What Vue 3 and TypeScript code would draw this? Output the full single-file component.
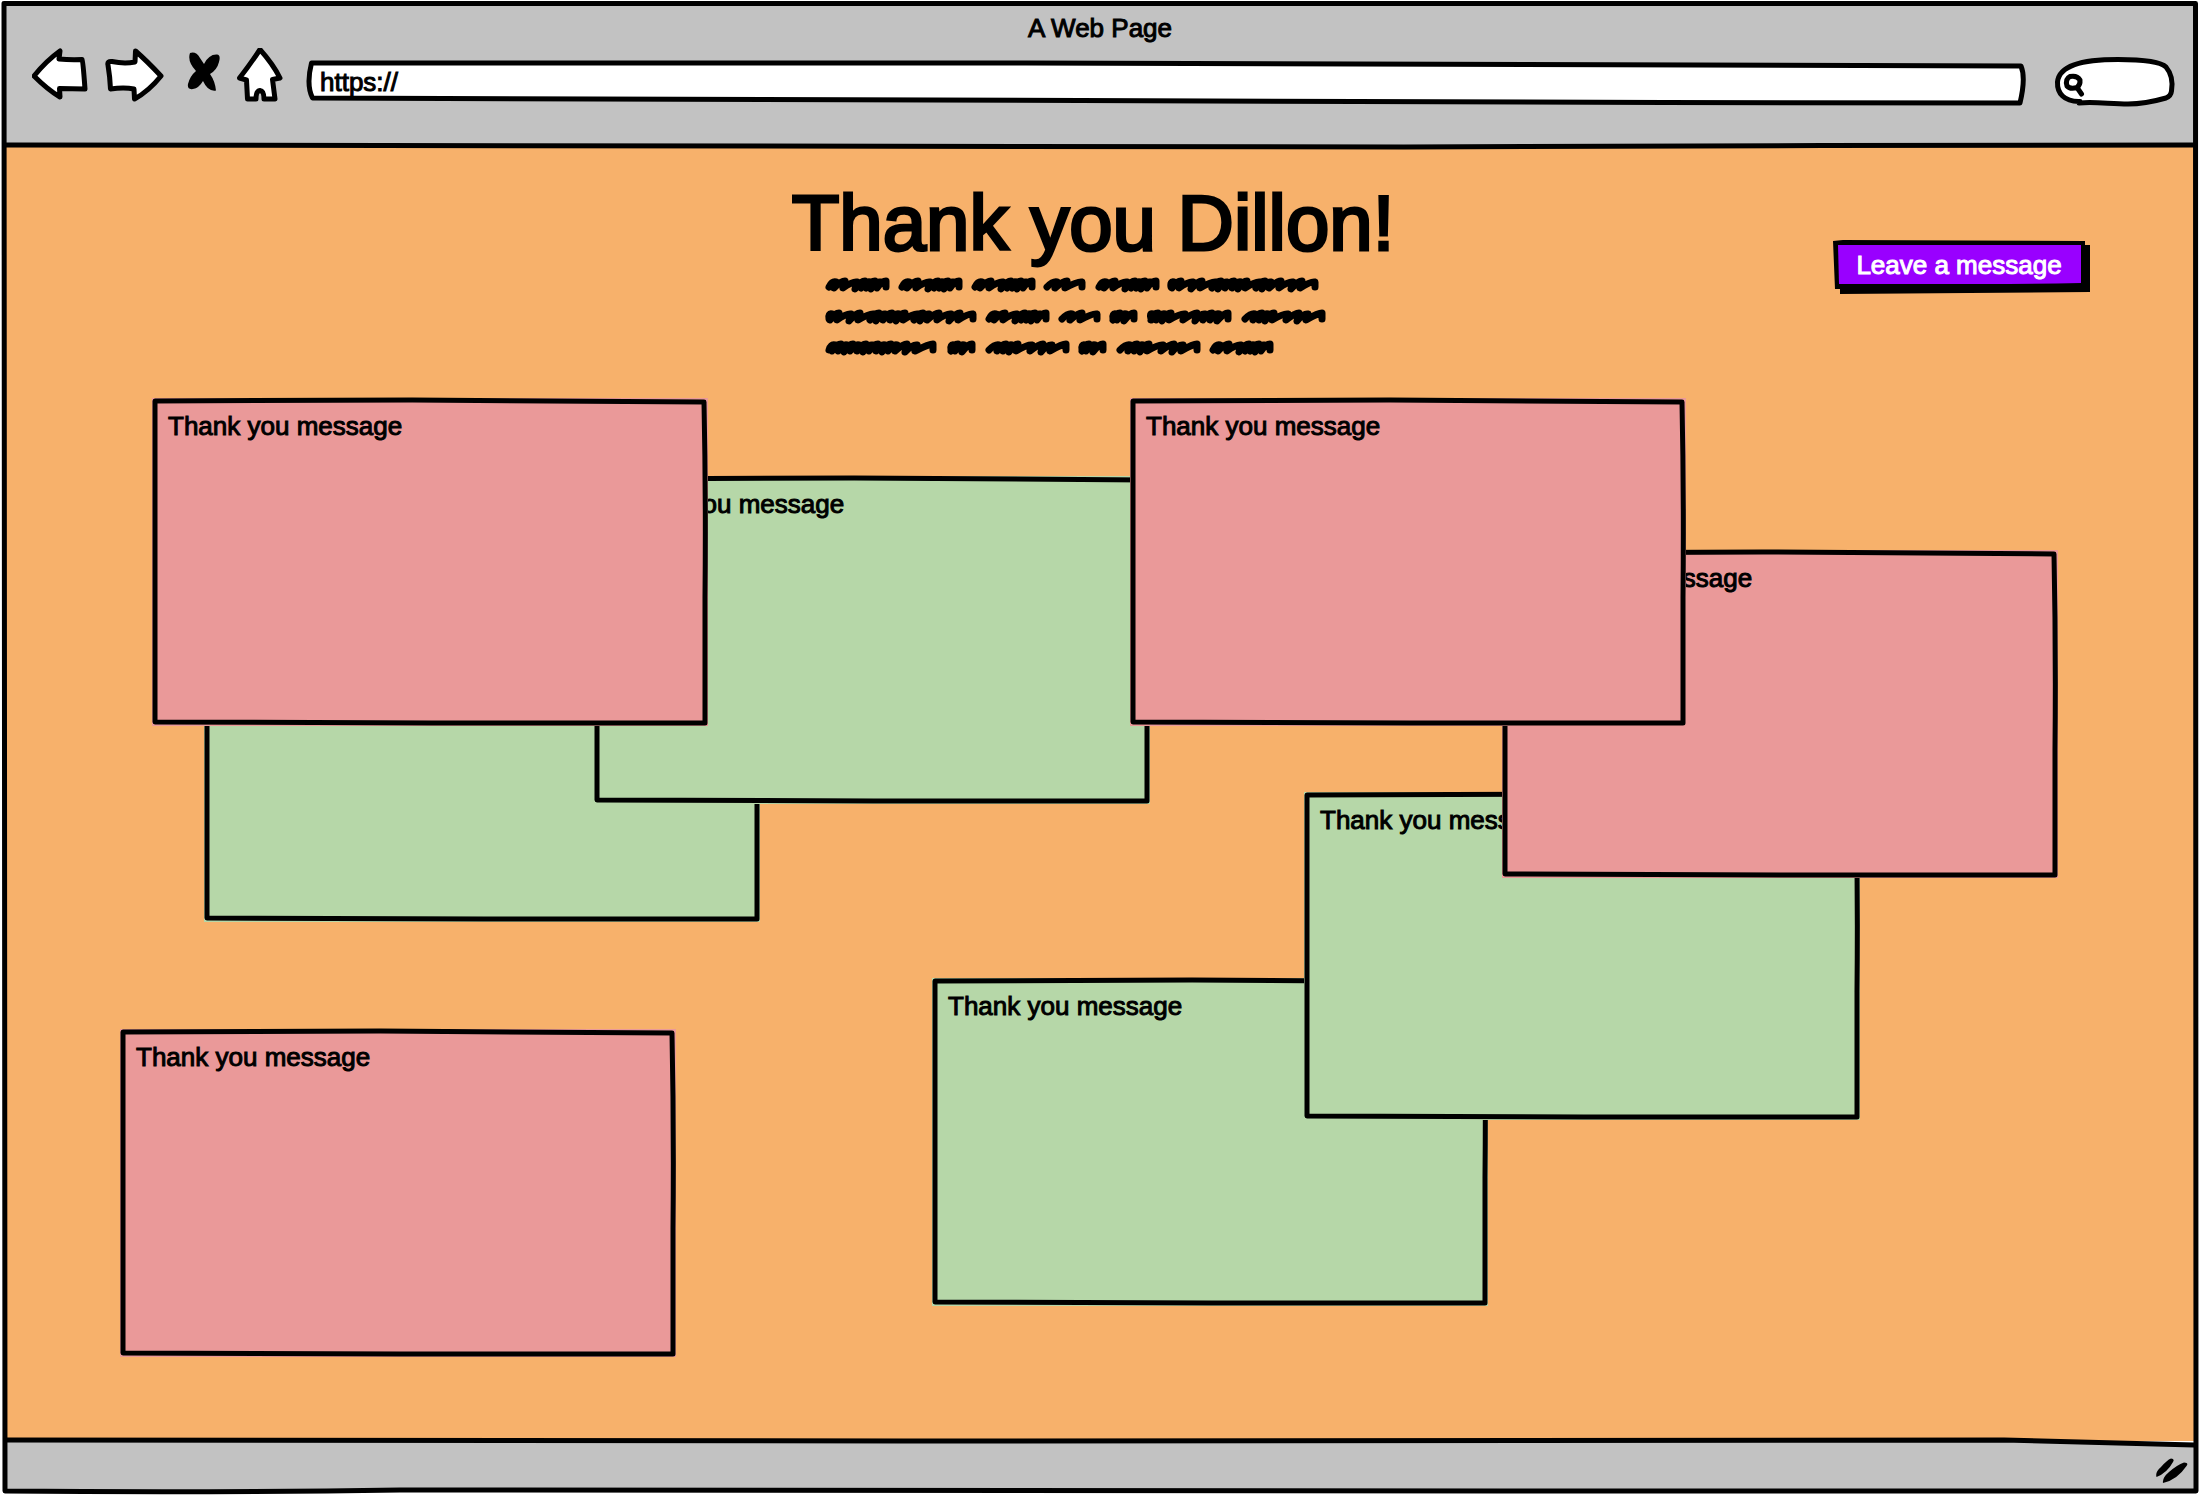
<script setup lang="ts">
import { ref } from 'vue'

interface Note {
  id: number
  x: number
  y: number
  color: 'pink' | 'green'
  text: string
}

type Word = 'short' | 'small' | 'tiny' | 'long' | 'middle' | 'wave' | 'dense'

const BOARD_WIDTH = 2192

const url = ref('https://')
const query = ref('')

// Listed from the bottom of the pile to the top.
const notes: Note[] = [
  { id: 1, x: 200, y: 232, color: 'green', text: 'Thank you message' },
  { id: 2, x: 590, y: 114, color: 'green', text: 'Thank you message' },
  { id: 3, x: 148, y: 36, color: 'pink', text: 'Thank you message' },
  { id: 4, x: 116, y: 667, color: 'pink', text: 'Thank you message' },
  { id: 5, x: 928, y: 616, color: 'green', text: 'Thank you message' },
  { id: 6, x: 1300, y: 430, color: 'green', text: 'Thank you message' },
  { id: 7, x: 1498, y: 188, color: 'pink', text: 'Thank you message' },
  { id: 8, x: 1126, y: 36, color: 'pink', text: 'Thank you message' },
]

// Pen peaks of each scribbled word, measured from the start of the word.
const peaks: Record<Word, number[]> = {
  short: [11, 20, 32, 40, 45, 50, 55, 61],
  small: [14, 24, 39],
  tiny: [7, 11, 17, 25],
  long: [7, 14, 26, 35, 49, 54, 60, 67, 74, 80, 93, 98, 104, 114, 126, 135, 148],
  middle: [6, 11, 18, 24, 38, 50, 58, 65, 72, 81],
  wave: [14, 21, 27, 33, 47, 58, 67, 81],
  dense: [10, 16, 22, 28, 34, 41, 47, 53, 60, 66, 72, 82, 92, 108],
}

const lines: { y: number; words: [Word, number][] }[] = [
  { y: 15, words: [['short', 0], ['short', 73], ['short', 146], ['small', 218], ['short', 270], ['long', 342]] },
  { y: 47, words: [['long', 0], ['short', 160], ['small', 233], ['tiny', 284], ['middle', 322], ['wave', 416]] },
  { y: 78, words: [['dense', 0], ['tiny', 122], ['wave', 160], ['tiny', 253], ['wave', 291], ['short', 384]] },
]

function scribble(word: Word, x: number, y: number): string {
  const list = peaks[word]
  let path = `M${x + 4} ${y + 2}`
  list.forEach((peak, i) => {
    const next = list[i + 1]
    // The pen bends over at the top of each stroke before it falls back.
    path += ` Q${x + peak - 4} ${y - 4} ${x + peak} ${y - 3 - (i % 2)}`
    if (next === undefined) {
      path += ` L${x + peak} ${y + 2}`
    } else {
      const valley = Math.max(Math.min(next - 9, peak - 2), 4)
      path += ` L${x + valley} ${y + 3 + (i % 3 === 2 ? 1 : 0)}`
    }
  })
  return path
}

const strokes = lines.flatMap((line) => line.words.map(([word, x]) => scribble(word, x, line.y)))
</script>

<template>
  <div class="page">
    <header class="chrome">
      <svg class="backdrop" viewBox="0 0 2192 141" preserveAspectRatio="none" aria-hidden="true">
        <path class="gray" d="M0 0H2192V141C1900 141 1700 142 1400 143C1000 144 600 143 0 141Z" />
        <path class="ink" d="M2 141C600 143 1000 144 1400 143C1700 142 1900 141 2190 141" />
      </svg>
      <div class="title">A Web Page</div>
      <nav class="toolbar" aria-label="Browser">
        <button class="tool" type="button" aria-label="Back">
          <svg width="56" height="56" viewBox="32 47 56 56">
            <path class="shape" d="M34 75Q46 60 60 50L59 58Q70 59 82 58.500Q83 60 85 88L59.500 87.500L60 96Q48 89 34 75Z" />
          </svg>
        </button>
        <button class="tool" type="button" aria-label="Forward">
          <svg width="60" height="56" viewBox="104 47 60 56">
            <path class="shape" d="M108 64Q107 60 112 60.500Q124 63 135 61L135.500 50Q147 60 161 75Q149 90 134.500 98L134 88Q124 86 110.500 88Q110 76 108 64Z" />
          </svg>
        </button>
        <button class="tool" type="button" aria-label="Stop">
          <svg width="40" height="56" viewBox="180 47 40 56">
            <path
              d="M190 52Q196 50 200 57L204 63Q209 53 217 53.500Q221 54 219 61Q217 69 210 73Q215 80 216 89.500Q208 91 203 80Q199 87 193 88Q187 89 188 83Q190 75 196 70Q187 60 190 52Z"
            />
          </svg>
        </button>
        <button class="tool" type="button" aria-label="Home">
          <svg width="48" height="56" viewBox="236 47 48 56">
            <path class="shape" d="M260 48.500Q273 63 280 77L272.500 78.500L275 98L264 98Q264 90 260 89.500Q256 90 256 98L247.500 98L246.500 79L239.500 77Q249 65 260 48.500Z" />
          </svg>
        </button>
        <label class="address">
          <svg class="backdrop" viewBox="300 46 1738 60" preserveAspectRatio="none" aria-hidden="true">
            <path class="shape" d="M311.500 63C900 62 1400 64 2021 66Q2026 78 2020 103C1500 103 1100 100 312.500 98Q306 85 311.500 63Z" />
          </svg>
          <input v-model="url" class="url" type="text" aria-label="Address" />
        </label>
        <label class="search">
          <svg class="backdrop" viewBox="2054 46 122 60" aria-hidden="true">
            <path
              class="shape"
              d="M2080 101.500C2064 102 2057 93 2057.500 82C2059 66 2080 59.500 2118 59.500C2142 59.500 2160 61 2166 67C2171 73 2173 82 2171.500 91Q2171 96 2166 98Q2145 104 2128 104C2110 104 2095 101.500 2079 103"
            />
            <path class="lens" d="M2077 87.500Q2070 89.500 2067 86Q2065 79 2070 76.500Q2077 75 2080 80Q2080.500 85 2077 87.500L2081.500 94" />
          </svg>
          <input v-model="query" class="query" type="text" aria-label="Search" />
        </label>
      </nav>
    </header>

    <main class="board">
      <div class="hero">
        <div class="intro">
          <h1 class="heading">Thank you Dillon!</h1>
          <svg class="scribbles" width="504" height="92" viewBox="0 0 504 92" aria-hidden="true">
            <path v-for="(d, i) in strokes" :key="i" class="scribble" :d="d" />
          </svg>
        </div>
        <button class="leave" type="button">
          <svg class="backdrop" viewBox="0 0 257 54" preserveAspectRatio="none" aria-hidden="true">
            <path d="M0 1L10 0L252 1V5H257V52L7 54V49H2Z" />
            <path class="violet" d="M5 5L248 5V43Q200 44 150 44H6Z" />
          </svg>
          <span class="leave-text">Leave a message</span>
        </button>
      </div>

      <section class="notes" aria-label="Messages">
        <article
          v-for="note in notes"
          :key="note.id"
          class="note"
          :class="note.color"
          :style="{ left: `${(note.x / BOARD_WIDTH) * 100}%`, top: `${note.y}px` }"
        >
          <svg class="backdrop" viewBox="0 0 556 328" preserveAspectRatio="none" aria-hidden="true">
            <path class="ink" d="M3 3Q130 2 260 2Q420 3 552 4Q554 100 553 200Q553 270 553 325Q400 325 280 325Q140 325 3 324Q3 260 3 160Z" />
          </svg>
          <p class="note-text">{{ note.text }}</p>
        </article>
      </section>
    </main>

    <footer class="status">
      <svg class="backdrop" viewBox="0 0 2192 50" preserveAspectRatio="none" aria-hidden="true">
        <path class="gray" d="M0 -1Q300 1 900 0Q1500 -1 2000 -1L2192 4V50H0Z" />
        <path class="ink" d="M2 -1Q300 1 900 0Q1500 -1 2000 -1L2190 4" />
      </svg>
      <svg class="grip" width="32" height="28" viewBox="2157 1457 32 28" aria-hidden="true">
        <path d="M2157.500 1477Q2156 1472 2162 1467Q2168 1460 2172 1458.500Q2176 1459 2174 1462Q2168 1473 2157.500 1477Z" />
        <path d="M2164 1483Q2163 1478 2170 1472Q2178 1465 2185 1462.500Q2190 1463 2187.500 1466Q2178 1480 2164 1483Z" />
      </svg>
    </footer>

    <svg class="frame" viewBox="0 0 2200 1496" preserveAspectRatio="none" aria-hidden="true">
      <path class="ink" d="M4 3.500H2195.500Q2195 800 2196 1491Q1900 1490 1500 1491Q900 1491 400 1490Q200 1493 5 1491Q4 800 4 3.500Z" />
    </svg>
  </div>
</template>

<style>
body {
  margin: 0;
  background: #fff;
}
</style>

<style scoped>
.page {
  position: relative;
  box-sizing: border-box;
  display: flex;
  flex-direction: column;
  min-height: 100vh;
  padding: 4px;
  color: #000;
  font-family: "Liberation Sans", Arial, sans-serif;
  font-size: 26px;
  line-height: 30px;
}

.backdrop {
  position: absolute;
  inset: 0;
  width: 100%;
  height: 100%;
  overflow: visible;
  pointer-events: none;
}

.gray {
  fill: #c2c2c2;
}

.ink,
.shape,
.lens,
.scribble {
  fill: none;
  stroke: #000;
  stroke-width: 5px;
  stroke-linejoin: round;
  stroke-linecap: round;
  vector-effect: non-scaling-stroke;
}

.shape {
  fill: #fff;
}

.scribble {
  stroke-width: 7px;
}

.frame {
  position: absolute;
  inset: 0;
  z-index: 2;
  width: 100%;
  height: 100%;
  pointer-events: none;
}

.chrome {
  position: relative;
  z-index: 1;
  box-sizing: border-box;
  height: 141px;
  padding-top: 9px;
}

.title,
.url,
.note-text,
.leave-text {
  -webkit-text-stroke: 1px currentColor;
}

.title {
  position: relative;
  text-align: center;
}

.toolbar {
  position: relative;
  display: flex;
  gap: 16px;
  margin-top: 3px;
  padding: 0 20px 0 28px;
}

.tool {
  display: block;
  padding: 0;
  border: 0;
  background: none;
  cursor: pointer;
}

.tool svg {
  display: block;
}

.address,
.search {
  position: relative;
  display: block;
  height: 60px;
}

.address {
  flex: 1;
}

.search {
  width: 122px;
}

.url,
.query {
  position: relative;
  box-sizing: border-box;
  width: 100%;
  border: 0;
  outline: 0;
  background: transparent;
  color: inherit;
  font: inherit;
}

.url {
  height: 30px;
  margin-top: 21px;
  padding: 0 28px 0 20px;
}

.query {
  height: 30px;
  margin-top: 21px;
  padding: 0 12px 0 32px;
}

.board {
  flex: 1;
  display: flex;
  flex-direction: column;
  background: #f7b16b;
}

.hero {
  display: grid;
  grid-template-columns: 1fr auto 1fr;
  align-items: start;
}

.intro {
  grid-column: 2;
  padding: 33px 14px 0 0;
}

.heading {
  margin: 0 0 2px;
  font-size: 78px;
  font-weight: 400;
  line-height: 90px;
  white-space: nowrap;
  -webkit-text-stroke: 3px currentColor;
}

.scribbles {
  display: block;
  margin-left: 33px;
  overflow: visible;
}

.leave {
  position: relative;
  justify-self: end;
  width: 257px;
  height: 54px;
  margin: 95px 106px 0 0;
  padding: 0 5px 4px 0;
  border: 0;
  background: none;
  color: #fff;
  font: inherit;
  cursor: pointer;
}

.violet {
  fill: #9900ff;
}

.leave-text {
  position: relative;
}

.notes {
  position: relative;
  flex: 1;
  min-height: 1060px;
}

.note {
  position: absolute;
  box-sizing: border-box;
  width: 556px;
  height: 328px;
  padding: 13px 16px;
}

.pink {
  background: #ea9999;
}

.green {
  background: #b6d7a8;
}

.note-text {
  position: relative;
  margin: 0;
}

.status {
  position: relative;
  display: flex;
  box-sizing: border-box;
  justify-content: flex-end;
  height: 51px;
  padding: 16px 8px 0 0;
}

.grip {
  position: relative;
  display: block;
}
</style>
